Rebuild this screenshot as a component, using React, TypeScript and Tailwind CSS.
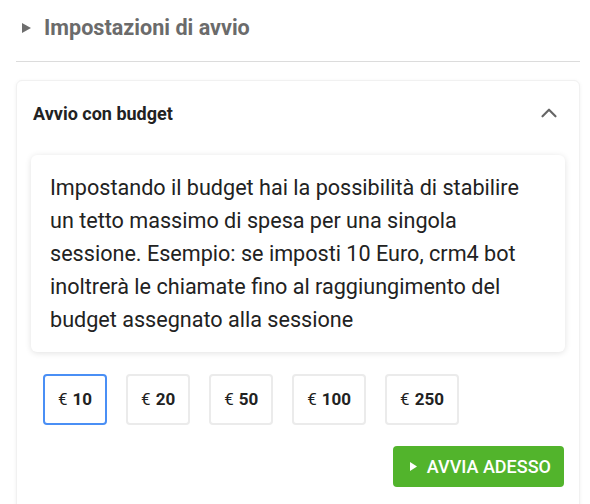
import { ChevronUp } from "lucide-react";

const AMOUNTS = [10, 20, 50, 100, 250];

export default function App() {
  const selected = 10;
  return (
    <div className="min-h-screen bg-white pl-4 pr-[10px] font-['Roboto',sans-serif]">
      <div className="flex h-[56px] items-center gap-[13px] pl-[6px]">
        <svg width="9" height="10" viewBox="0 0 9 10" className="text-[#6e6e6e]">
          <path d="M0 0 L9 5 L0 10 Z" fill="currentColor" />
        </svg>
        <h2 className="text-[21.6px] font-bold text-[#6b6b6b]">Impostazioni di avvio</h2>
      </div>
      <div className="mt-[5px] h-px bg-[#dcdcdc]" />

      <div className="mt-[18px] rounded-md border border-[#f1f1f1] bg-white pb-6 shadow-[0_1px_4px_rgba(0,0,0,0.06)]">
        <div className="flex h-[64px] items-center justify-between pl-4 pr-[17px]">
          <h3 className="text-[18px] font-bold text-[#222]">Avvio con budget</h3>
          <ChevronUp size={26} strokeWidth={2} className="text-[#666]" />
        </div>

        <div className="mx-[14px] mt-[10px] rounded-md bg-white px-[19px] py-4 text-[21.6px] leading-[33px] text-[#222] shadow-[0_1px_6px_rgba(0,0,0,0.12)]">
          Impostando il budget hai la possibilità di stabilire un tetto massimo di spesa per una singola
          sessione. Esempio: se imposti 10 Euro, crm4 bot inoltrerà le chiamate fino al raggiungimento del
          budget assegnato alla sessione
        </div>

        <div className="mt-[22px] flex gap-[19px] pl-[26px]">
          {AMOUNTS.map((a) => (
            <button
              key={a}
              className={
                a === selected
                  ? "flex h-[51px] items-center rounded-[4px] border-2 border-[#4a8ff5] bg-white px-[13px] text-[17px] text-[#222]"
                  : "flex h-[51px] items-center rounded-[4px] border-2 border-[#ebebeb] bg-white px-[13px] text-[17px] text-[#222]"
              }
            >
              <span className="font-normal">€</span>
              <span className="ml-[5px] font-bold">{a}</span>
            </button>
          ))}
        </div>

        <div className="mt-[21px] flex justify-end pr-[15px]">
          <button className="flex h-[41px] items-center gap-[10px] rounded-[4px] bg-[#52b42c] pl-[17px] pr-[13px] text-[18px] font-medium uppercase text-white">
            <svg width="7" height="9" viewBox="0 0 7 9">
              <path d="M0 0 L7 4.5 L0 9 Z" fill="white" />
            </svg>
            Avvia adesso
          </button>
        </div>
      </div>
    </div>
  );
}
